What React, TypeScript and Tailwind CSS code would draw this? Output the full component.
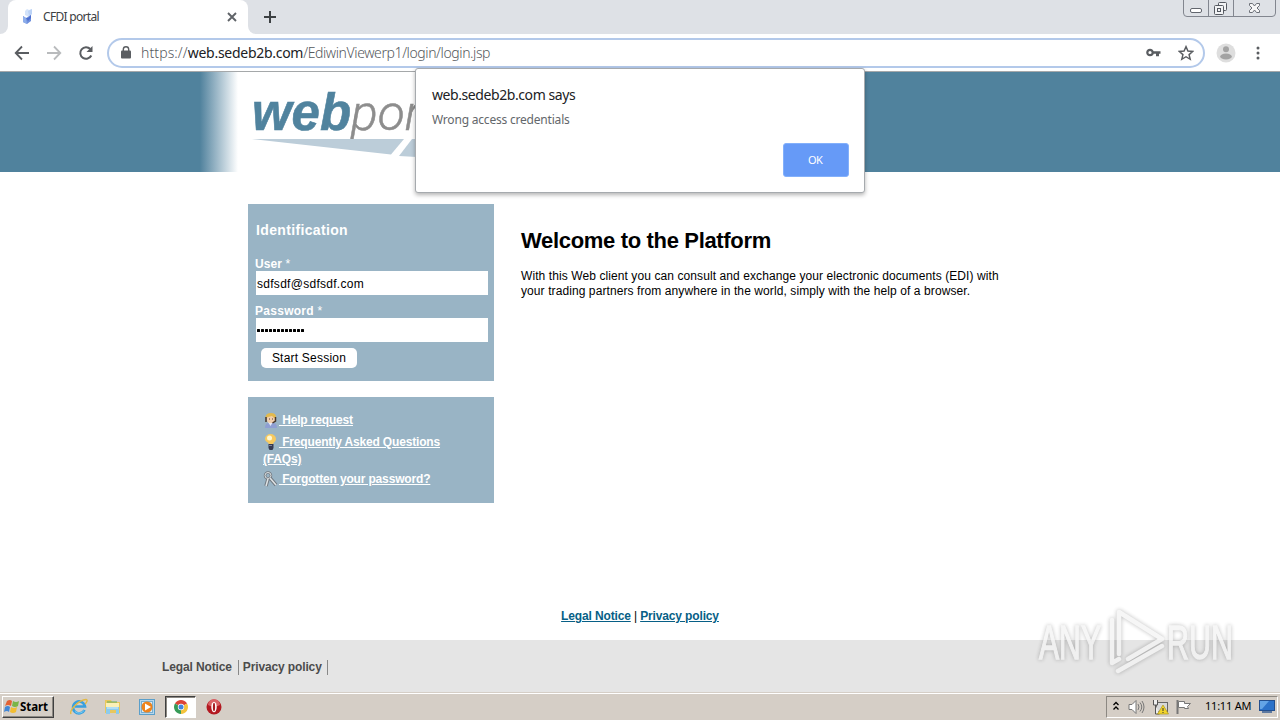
import React from "react";

const TAHOMA = "font-['Noto_Sans','Open_Sans',sans-serif]";
const ARIAL = "font-['Liberation_Sans',Arial,sans-serif]";

function Favicon() {
  return (
    <svg width="12" height="18" viewBox="0 0 12 18" className="shrink-0">
      <path d="M3 3 5 1l2 1 3-1v5L7 9 3 7z" fill="#d3e3fa" />
      <path d="M6 3l4-2v5L7 8z" fill="#bcd3f6" />
      <path d="M1 8l3 2 5-3v6l-4 3-4-2z" fill="#6f90dd" />
      <path d="M1 8l3 2 1 6-4-2z" fill="#8dadea" />
      <path d="M4 10h2l3-3v3l-3 3z" fill="#4d6fd0" />
    </svg>
  );
}

function TabStrip() {
  return (
    <div className="flex h-[34px] justify-between bg-[#dee1e6]">
      <div className="flex">
        <div className="w-2 bg-white">
          <div className="h-full rounded-br-lg bg-[#dee1e6]" />
        </div>
        <div className="flex w-[240px] items-center rounded-t-lg bg-white pl-[14px] pr-[11px]">
          <Favicon />
          <span className="ml-[9px] flex-1 whitespace-nowrap text-[12px] tracking-[-0.7px] text-[#3c4043]">CFDI portal</span>
          <svg width="10" height="10" viewBox="0 0 10 10" stroke="#5f6368" strokeWidth="1.9">
            <path d="M1 1l8 8M9 1 1 9" />
          </svg>
        </div>
        <div className="w-2 bg-white">
          <div className="h-full rounded-bl-lg bg-[#dee1e6]" />
        </div>
        <svg width="12" height="12" viewBox="0 0 12 12" stroke="#3c4043" strokeWidth="2" className="ml-2 mt-[11px]">
          <path d="M6 0v12M0 6h12" />
        </svg>
      </div>
      <svg width="97" height="18" viewBox="0 0 97 18" fill="none" stroke="#82868f">
        <path d="M.5 0v13q0 3.500 3.500 3.500h85q3.500 0 3.500-3.500V0M25.500 0v16M50.500 0v16" />
        <rect x="7.500" y="8.500" width="11" height="4" rx="1.500" fill="#fff" stroke="#62666e" />
        <g stroke="#555961" fill="#f2f3f5">
          <rect x="35.500" y="2.500" width="8" height="8" rx="1" />
          <rect x="31.500" y="5.500" width="9" height="9" rx="1" />
          <rect x="34.500" y="8.500" width="3" height="3" />
        </g>
        <path d="M66.500 3.500h3l2 2.500 2-2.500h3v2L74 8l2.500 2.500v2h-3l-2-2.500-2 2.500h-3v-2L69 8l-2.500-2.500z" fill="#f6f6f7" stroke="#6c7078" />
      </svg>
    </div>
  );
}

function Toolbar() {
  return (
    <div className="flex h-[38px] items-center border-b border-[#a5a8aa] bg-white pl-[14px] pr-[14px]">
      <svg width="16" height="16" viewBox="0 0 16 16" fill="none" stroke="#5a5d61" strokeWidth="1.800">
        <path d="M15 8H2M8 1.500 1.700 8 8 14.500" />
      </svg>
      <svg width="16" height="16" viewBox="0 0 16 16" fill="none" stroke="#b9bbbd" strokeWidth="1.800" className="ml-4">
        <path d="M1 8h13M8 1.500 14.300 8 8 14.500" />
      </svg>
      <svg width="16" height="16" viewBox="0 0 16 16" fill="none" stroke="#5a5d61" strokeWidth="2" className="ml-4">
        <path d="M13.300 10.500A5.800 5.800 0 1 1 12.300 4" />
        <path d="M14.500 1v6h-6z" fill="#5a5d61" stroke="none" />
      </svg>
      <div className="ml-[13px] flex h-[30px] w-[1098px] items-center rounded-full border-2 border-[#b3c9ea] bg-white pl-3 pr-[9px]">
        <svg width="10" height="13" viewBox="0 0 10 13" className="shrink-0">
          <rect x="0" y="4.500" width="10" height="8" rx="1" fill="#5a5d61" />
          <path d="M2.300 5V3.500a2.700 2.700 0 0 1 5.400 0V5" fill="none" stroke="#5a5d61" strokeWidth="1.400" />
        </svg>
        <span className="ml-[10px] flex-1 whitespace-nowrap text-[14px] font-light text-[#55595d]">
          <span className="tracking-[0.1px]">https://</span><span className="tracking-[-0.28px] font-normal text-[#202124]">web.sedeb2b.com</span><span className="tracking-[-0.4px]">/EdiwinViewerp1/login/login.jsp</span>
        </span>
        <svg width="15" height="10" viewBox="0 0 15 10">
          <circle cx="4" cy="4.500" r="2.700" fill="none" stroke="#5a5d61" strokeWidth="2.200" />
          <path d="M7 3.300h7.500v2.500H13v2.400h-3V5.800H7z" fill="#5a5d61" />
        </svg>
        <svg width="16" height="16" viewBox="0 0 24 24" fill="none" stroke="#5a5d61" strokeWidth="2.200" className="ml-[17px]">
          <path d="M12 2.500l2.900 6.600 7.100.6-5.400 4.700 1.700 7L12 17.600l-6.300 3.800 1.700-7L2 9.700l7.100-.6z" />
        </svg>
      </div>
      <svg width="20" height="20" viewBox="0 0 20 20" className="ml-[11px]">
        <circle cx="10" cy="10" r="9.500" fill="#dedede" />
        <circle cx="10" cy="6.200" r="3" fill="#a3a3a3" />
        <ellipse cx="10" cy="13.500" rx="5.800" ry="3" fill="#a3a3a3" />
      </svg>
      <svg width="4" height="14" viewBox="0 0 4 14" fill="#5a5d61" className="ml-auto mr-[6px]">
        <circle cx="2" cy="2" r="1.500" />
        <circle cx="2" cy="7" r="1.500" />
        <circle cx="2" cy="12" r="1.500" />
      </svg>
    </div>
  );
}

function Logo() {
  return (
    <svg width="300" height="100" viewBox="0 0 300 100">
      <text x="12" y="58" textLength="99" lengthAdjust="spacingAndGlyphs" fontFamily="Liberation Sans, sans-serif" fontWeight="700" fontStyle="italic" fontSize="51" fill="#50839e" stroke="#50839e" strokeWidth=".6">web</text>
      <text x="111" y="58" textLength="70" lengthAdjust="spacingAndGlyphs" fontFamily="Roboto, sans-serif" fontWeight="300" fontStyle="italic" fontSize="49" fill="#8d8d8d" stroke="#8d8d8d" strokeWidth=".5">por</text>
      <path d="M12 67h152l-13 15.500z" fill="#bccdd9" />
      <path d="M172 67h40v20l-53-3z" fill="#bccdd9" />
    </svg>
  );
}

function Banner() {
  return (
    <div className="flex h-[100px] bg-[#50829d]">
      <div className="w-[200px]" />
      <div className="w-[38px] bg-linear-to-r from-[#50829d] to-white" />
      <div className="w-[400px] bg-white pl-[2px]">
        <Logo />
      </div>
    </div>
  );
}

function Alert() {
  return (
    <div className={"absolute left-[415px] top-[68px] flex h-[125px] w-[450px] flex-col rounded-[3px] border border-[#a6aaae] bg-white px-4 shadow-[0_2px_4px_rgba(0,0,0,0.3)] " + TAHOMA}>
      <div className="mt-4 text-[14px] leading-5 tracking-[-0.42px] text-[#202124]">web.sedeb2b.com says</div>
      <div className="mt-[5px] text-[12px] leading-5 tracking-[-0.2px] text-[#63676b]">Wrong access credentials</div>
      <div className="mr-[-1px] mt-[13px] flex h-[34px] w-[66px] items-center justify-center self-end rounded-[3px] border border-[#83b0fb] bg-[#669af7] pr-[2px] text-[11px] tracking-[-0.6px] text-white">OK</div>
    </div>
  );
}

function Identification() {
  return (
    <div className="h-[177px] w-[246px] bg-[#99b4c5] pl-2 pr-[6px] pt-[17px] text-white">
      <div className="text-[14px] font-bold leading-[18px] tracking-[0.35px]">Identification</div>
      <div className="ml-[-1px] mt-[18px] h-[14px] text-[12px] font-bold leading-[15px] tracking-[0.1px]">User <span className="font-normal">*</span></div>
      <div className="flex h-6 items-center bg-white pl-px pt-[2px] text-[12px] tracking-[0.28px] text-black">sdfsdf@sdfsdf.com</div>
      <div className="ml-[-1px] mt-[9px] h-[14px] text-[12px] font-bold leading-[15px] tracking-[0.28px]">Password <span className="font-normal">*</span></div>
      <div className="flex h-6 items-center gap-px bg-white pl-px">
        {Array.from({ length: 12 }, (_, i) => (
          <span key={i} className="size-[3px] rounded-[0.5px] bg-black" />
        ))}
      </div>
      <div className="ml-[5px] mt-[6px] flex h-5 w-24 items-center justify-center rounded-[5px] bg-white text-[12px] tracking-[0.22px] text-black">Start Session</div>
    </div>
  );
}

function HelpIcon() {
  return (
    <svg width="16" height="16" viewBox="0 0 16 16" className="inline-block align-top">
      <path d="M2 16q0-5 4-5h4q4 0 4 5z" fill="#8f9fd3" />
      <path d="M5 10h5l-2.500 4z" fill="#e7ebf6" />
      <rect x="4" y="3" width="8" height="8" rx="3.500" fill="#f3cfac" />
      <path d="M2.500 5Q3 1 8 1q5 0 5 4l-2 1-2-2-4 1-2 1z" fill="#e1b94d" />
      <path d="M3 5v5M12.500 5v4l-3 2" stroke="#4a3628" strokeWidth="1.500" fill="none" />
      <path d="M6 7h1m2 0h1" stroke="#554238" />
    </svg>
  );
}

function BulbIcon() {
  return (
    <svg width="16" height="16" viewBox="0 0 16 16" className="inline-block align-top">
      <path d="M2 5a5.500 5 0 0 1 11 0c0 3-3 3-3 6H6c0-3-4-3-4-6z" fill="#f6c960" />
      <circle cx="6.500" cy="4" r="2.500" fill="#fff7cf" />
      <path d="M5.500 10h5v4l-1 2h-3l-1-2z" fill="#363a52" />
      <path d="M6 11.500h3" stroke="#7f859d" />
    </svg>
  );
}

function KeysIcon() {
  return (
    <svg width="16" height="16" viewBox="0 0 16 16" fill="none" className="inline-block align-top">
      <circle cx="5" cy="4.500" r="3" stroke="#717980" strokeWidth="2.500" />
      <circle cx="5" cy="4.500" r="3" stroke="#dfe3e5" />
      <path d="M5 8l-2 7M7 7l6 7" stroke="#717980" strokeWidth="3.500" />
      <path d="M5 8l-2 7M7 7l6 7" stroke="#dfe3e5" strokeWidth="1.500" />
    </svg>
  );
}

function HelpLinks() {
  return (
    <div className="mt-4 h-[106px] w-[246px] bg-[#99b4c5] pl-[15px] pr-[30px] pt-[15px] text-[12px] font-bold text-white">
      <div className="whitespace-nowrap leading-[17px]"><HelpIcon /><span className="tracking-[-0.16px] underline">&nbsp;Help request</span></div>
      <div className="mt-[5px] whitespace-nowrap leading-[17px]"><BulbIcon /><span className="tracking-[-0.17px] underline">&nbsp;Frequently Asked Questions<br />(FAQs)</span></div>
      <div className="mt-[3px] whitespace-nowrap leading-[17px]"><KeysIcon /><span className="tracking-[-0.16px] underline">&nbsp;Forgotten your password?</span></div>
    </div>
  );
}

function Watermark() {
  return (
    <svg width="210" height="76" viewBox="0 0 210 76" className="absolute left-[1036px] top-[604px] drop-shadow-[0_0_2px_rgba(0,0,0,0.35)]" opacity="0.75">
      <g fill="#f4f4f4" stroke="#f4f4f4" strokeWidth="1.300" fontFamily="Liberation Sans Narrow, Liberation Sans, sans-serif" fontSize="48">
        <text x="3" y="55" textLength="62" lengthAdjust="spacingAndGlyphs">ANY</text>
        <text x="131" y="55" textLength="66" lengthAdjust="spacingAndGlyphs">RUN</text>
      </g>
      <g fill="none" stroke="#f4f4f4" strokeWidth="4.500" strokeLinejoin="round" strokeLinecap="round">
        <path d="M83 50V8l43 27-34 20" />
        <path d="M76 16v43l7-4M82 67l44-25" />
      </g>
    </svg>
  );
}

function WindowsFlag() {
  return (
    <svg width="16" height="15" viewBox="0 0 16 15">
      <path d="M3 2q3-2 5 0L7 7Q4 5 1 7z" fill="#e36234" />
      <path d="M9 2q3 2 6 0l-1 5q-3 2-6 0z" fill="#7ab547" />
      <path d="M1 8q3-2 5 0l-1 5q-2-2-5 0z" fill="#4287d6" />
      <path d="M7 8q3 2 6 0l-1 5q-3 2-6 0z" fill="#f2bd32" />
    </svg>
  );
}

function Taskbar() {
  return (
    <div className="flex h-[28px] items-center border-t border-[#d5cec6] bg-[#d5cec6] pl-[2px] shadow-[inset_0_1px_0_#fff]">
      <div className="flex h-[22px] w-[52px] items-center border border-b-[#404040] border-l-white border-r-[#404040] border-t-white pl-px shadow-[inset_-1px_-1px_0_#8c8882]">
        <WindowsFlag />
        <span className="whitespace-nowrap text-[11.5px] font-bold tracking-[-0.1px] text-black">Start</span>
      </div>
      <svg width="18" height="18" viewBox="0 0 18 18" fill="none" className="ml-4">
        <path d="M14.500 12A6 6 0 1 1 15 8.500H5" stroke="#3aa0df" strokeWidth="2.600" />
        <path d="M14 12.500a6 6 0 0 1-9 1" stroke="#78cdf2" />
        <path d="M1 16C-1 12 9 2 16 1.500c2 0 1 3-1 4.500" stroke="#e3b943" strokeWidth="1.400" />
      </svg>
      <svg width="17" height="17" viewBox="0 0 17 17" className="ml-4">
        <path d="M1 2h6l1 2h8v11H1z" fill="#e8c75c" />
        <path d="M2 5h13v4H2z" fill="#fbf0b6" />
        <path d="M3 4h10" stroke="#61ae61" />
        <path d="M2 9h13v7h-3v-4H6v4H2z" fill="#8ccbed" />
        <path d="M3 10h11" stroke="#d5f1fb" />
      </svg>
      <svg width="16" height="16" viewBox="0 0 16 16" className="ml-[18px]">
        <rect x=".5" y=".5" width="15" height="15" fill="#b7d7ec" stroke="#5b9fca" />
        <rect x="2.500" y="2.500" width="11" height="11" fill="#ddedf6" stroke="#77aed0" />
        <circle cx="8" cy="8" r="5.500" fill="#ee831c" />
        <path d="M6 4.500v7L12 8z" fill="#fff" />
      </svg>
      <div className="ml-[10px] flex h-[22px] w-[31px] items-center justify-center border border-b-white border-l-[#404040] border-r-white border-t-[#404040] bg-white shadow-[inset_1px_1px_0_#8c8882]">
        <svg width="14" height="14" viewBox="0 0 14 14">
          <path d="M7 7 .94 3.500A7 7 0 0 1 13.060 3.500z" fill="#dc4437" />
          <path d="M7 7 13.060 3.500A7 7 0 0 1 7 14z" fill="#f4c33c" />
          <path d="M7 7v7A7 7 0 0 1 .94 3.500z" fill="#379b58" />
          <circle cx="7" cy="7" r="3.200" fill="#fff" />
          <circle cx="7" cy="7" r="2.500" fill="#4285de" />
        </svg>
      </div>
      <svg width="16" height="16" viewBox="0 0 16 16" className="ml-[10px]">
        <circle cx="8" cy="8" r="7.500" fill="#b31921" />
        <path d="M2 6a6 6 0 0 1 12 0q-6 3-12 0" fill="#db6266" />
        <ellipse cx="8" cy="8" rx="2.700" ry="5.300" fill="#fff" />
        <ellipse cx="8" cy="8" rx="1.100" ry="4.300" fill="#a81c22" />
      </svg>
      <div className="ml-auto mr-[2px] flex h-[22px] w-[172px] items-center border border-b-white border-l-[#8c8882] border-r-white border-t-[#8c8882] pl-[6px]">
        <svg width="6" height="10" viewBox="0 0 6 10" fill="none" stroke="#000" strokeWidth="1.300" className="mb-[2px]">
          <path d="M.5 4 3 1.500 5.500 4M.5 8.500 3 6l2.500 2.500" />
        </svg>
        <svg width="17" height="16" viewBox="0 0 17 16" fill="none" stroke="#777" className="ml-[9px]">
          <path d="M1 5.500h3l4-4v13l-4-4H1z" fill="#fff" />
          <path d="M10 5q2 3 0 6M12 3.500q3.500 4.500 0 9M14 2q4 6 0 12" />
        </svg>
        <svg width="17" height="16" viewBox="0 0 17 16" className="ml-[7px]">
          <rect x="4.500" y="3.500" width="11" height="9" fill="#d7d8d8" stroke="#666" />
          <path d="M1.500 1v5h4V1M3.500 6v9h4" fill="#eee" stroke="#555" />
          <path d="M11 6l5.500 9h-11z" fill="#f2d52b" stroke="#ad971a" strokeWidth=".7" />
          <path d="M11 9v3m0 1v1" stroke="#333" />
        </svg>
        <svg width="17" height="16" viewBox="0 0 17 16" className="ml-[6px]">
          <path d="M2.500 1v14" stroke="#777" strokeWidth="2" />
          <path d="M3.500 2.500h6v2h6l-3 3 1 2h-4v-1h-6z" fill="#fff" stroke="#777" />
        </svg>
        <span className="ml-[13px] w-[47px] whitespace-nowrap text-[11px] tracking-[-0.22px] text-black">11:11 AM</span>
        <svg width="16" height="13" viewBox="0 0 16 13" className="ml-[7px]">
          <rect x=".5" y=".5" width="15" height="10" fill="#2c72c9" stroke="#234f8e" />
          <path d="M1 1h9L3 9H1z" fill="#63a4e6" />
          <path d="M3 12h10" stroke="#365d93" strokeWidth="1.500" />
        </svg>
      </div>
    </div>
  );
}

export default function App() {
  return (
    <div className={"relative flex h-[720px] w-[1280px] flex-col overflow-hidden bg-white " + ARIAL}>
      <div className={TAHOMA}>
        <TabStrip />
        <Toolbar />
      </div>
      <Banner />
      <main className="flex h-[436px] pl-[248px] pt-8">
        <div>
          <Identification />
          <HelpLinks />
        </div>
        <div className="ml-[27px] pt-[24px] text-black">
          <h1 className="whitespace-nowrap text-[22px] font-bold leading-[26px] tracking-[-0.33px]">Welcome to the Platform</h1>
          <p className="mt-[15px] whitespace-nowrap text-[12px] leading-[15px] tracking-[0.09px]">
            With this Web client you can consult and exchange your electronic documents (EDI) with
            <br />
            your trading partners from anywhere in the world, simply with the help of a browser.
          </p>
        </div>
      </main>
      <div className="h-8 text-center text-[12px] font-bold leading-4 tracking-[-0.14px] text-[#075f86]">
        <span className="underline">Legal Notice</span> <span className="font-normal text-black">|</span> <span className="underline">Privacy policy</span>
      </div>
      <footer className="flex h-[52px] items-center bg-[#e5e5e5] pl-[162px] pt-[3px] text-[12px] font-bold tracking-[-0.13px] text-[#4c4c4c]">
        <span className="border-r border-[#888] pr-[6px] leading-[15px]">Legal Notice</span>
        <span className="border-r border-[#888] pl-1 pr-[5px] leading-[15px]">Privacy policy</span>
      </footer>
      <div className={TAHOMA}>
        <Taskbar />
      </div>
      <Alert />
      <Watermark />
    </div>
  );
}
